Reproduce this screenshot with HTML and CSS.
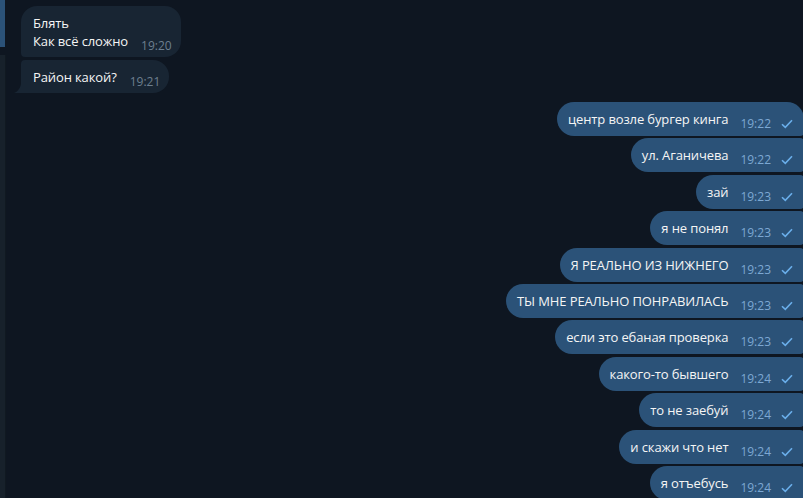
FILE: index.html
```html
<!DOCTYPE html>
<html lang="ru">
<head>
    <meta charset="UTF-8">
    <meta name="viewport" content="width=device-width, initial-scale=1.0">
    <title>Чат</title>
    <link rel="stylesheet" href="styles.css">
</head>
<body>
    <div class="app">
        <aside class="rail">
            <div class="rail-active"></div>
            <div class="rail-rest"></div>
        </aside>
        <main class="chat">
            <div class="group in">
                <div class="msg first">
                    <div class="text">Блять<br>Как всё сложно</div>
                    <div class="meta"><span class="time">19:20</span></div>
                </div>
                <div class="msg last">
                    <div class="text">Район какой?</div>
                    <div class="meta"><span class="time">19:21</span></div>
                    <svg class="tail" width="7" height="9" viewBox="0 0 7 9"><path d="M7 0 V9 H0 C3 8 6 5 7 0 Z" fill="#182533"/></svg>
                </div>
            </div>

            <div class="group out">
                <div class="msg first">
                    <div class="text">центр возле бургер кинга</div>
                    <div class="meta"><span class="time">19:22</span><svg class="check" width="12" height="10" viewBox="0 0 12 10"><path d="M1 5.2 L4.3 8.4 L11 1.2" fill="none" stroke="#6aaeea" stroke-width="1.6"/></svg></div>
                </div>
                <div class="msg">
                    <div class="text">ул. Аганичева</div>
                    <div class="meta"><span class="time">19:22</span><svg class="check" width="12" height="10" viewBox="0 0 12 10"><path d="M1 5.2 L4.3 8.4 L11 1.2" fill="none" stroke="#6aaeea" stroke-width="1.6"/></svg></div>
                </div>
                <div class="msg">
                    <div class="text">зай</div>
                    <div class="meta"><span class="time">19:23</span><svg class="check" width="12" height="10" viewBox="0 0 12 10"><path d="M1 5.2 L4.3 8.4 L11 1.2" fill="none" stroke="#6aaeea" stroke-width="1.6"/></svg></div>
                </div>
                <div class="msg">
                    <div class="text">я не понял</div>
                    <div class="meta"><span class="time">19:23</span><svg class="check" width="12" height="10" viewBox="0 0 12 10"><path d="M1 5.2 L4.3 8.4 L11 1.2" fill="none" stroke="#6aaeea" stroke-width="1.6"/></svg></div>
                </div>
                <div class="msg">
                    <div class="text">Я РЕАЛЬНО ИЗ НИЖНЕГО</div>
                    <div class="meta"><span class="time">19:23</span><svg class="check" width="12" height="10" viewBox="0 0 12 10"><path d="M1 5.2 L4.3 8.4 L11 1.2" fill="none" stroke="#6aaeea" stroke-width="1.6"/></svg></div>
                </div>
                <div class="msg">
                    <div class="text">ТЫ МНЕ РЕАЛЬНО ПОНРАВИЛАСЬ</div>
                    <div class="meta"><span class="time">19:23</span><svg class="check" width="12" height="10" viewBox="0 0 12 10"><path d="M1 5.2 L4.3 8.4 L11 1.2" fill="none" stroke="#6aaeea" stroke-width="1.6"/></svg></div>
                </div>
                <div class="msg">
                    <div class="text">если это ебаная проверка</div>
                    <div class="meta"><span class="time">19:23</span><svg class="check" width="12" height="10" viewBox="0 0 12 10"><path d="M1 5.2 L4.3 8.4 L11 1.2" fill="none" stroke="#6aaeea" stroke-width="1.6"/></svg></div>
                </div>
                <div class="msg">
                    <div class="text">какого-то бывшего</div>
                    <div class="meta"><span class="time">19:24</span><svg class="check" width="12" height="10" viewBox="0 0 12 10"><path d="M1 5.2 L4.3 8.4 L11 1.2" fill="none" stroke="#6aaeea" stroke-width="1.6"/></svg></div>
                </div>
                <div class="msg">
                    <div class="text">то не заебуй</div>
                    <div class="meta"><span class="time">19:24</span><svg class="check" width="12" height="10" viewBox="0 0 12 10"><path d="M1 5.2 L4.3 8.4 L11 1.2" fill="none" stroke="#6aaeea" stroke-width="1.6"/></svg></div>
                </div>
                <div class="msg">
                    <div class="text">и скажи что нет</div>
                    <div class="meta"><span class="time">19:24</span><svg class="check" width="12" height="10" viewBox="0 0 12 10"><path d="M1 5.2 L4.3 8.4 L11 1.2" fill="none" stroke="#6aaeea" stroke-width="1.6"/></svg></div>
                </div>
                <div class="msg last">
                    <div class="text">я отъебусь</div>
                    <div class="meta"><span class="time">19:24</span><svg class="check" width="12" height="10" viewBox="0 0 12 10"><path d="M1 5.2 L4.3 8.4 L11 1.2" fill="none" stroke="#6aaeea" stroke-width="1.6"/></svg></div>
                </div>
            </div>
        </main>
    </div>
</body>
</html>
```

FILE: styles.css
```css
body {
    margin: 0;
    padding: 0;
    background: #0e1621;
    color: #f5f5f5;
    font-family: 'Open Sans', 'Noto Sans', sans-serif;
    font-size: 13px;
    overflow: hidden;
}
.app {
    display: flex;
    width: 803px;
    height: 498px;
    overflow: hidden;
}
.rail {
    display: flex;
    flex-direction: column;
    gap: 8px;
    width: 5px;
    flex-shrink: 0;
}
.rail-active {
    height: 47px;
    background: #2b5278;
}
.rail-rest {
    flex: 1;
    background: #17212b;
    border-right: 1px solid #101921;
    margin-right: -1px;
}
.chat {
    flex: 1;
    padding: 6px 0 0 16px;
    min-width: 0;
}
.group {
    display: flex;
    flex-direction: column;
}
.group.in {
    align-items: flex-start;
    gap: 3px;
}
.group.out {
    align-items: flex-end;
    gap: 2.4px;
    margin: 9px -1px 0 0;
}
.msg {
    position: relative;
    display: flex;
    align-items: flex-end;
    line-height: 18px;
    white-space: nowrap;
}
.text {
    letter-spacing: -0.12px;
}
.in .msg {
    background: #182533;
    padding: 8px 9px 7px 12px;
}
.in .msg.first {
    border-radius: 16px 16px 16px 4px;
}
.in .msg.last {
    border-radius: 4px 16px 16px 0;
}
.out .msg {
    background: #2b5278;
    padding: 8px 11px 8px 11px;
    border-radius: 17px 4px 4px 17px;
}
.out .msg.first {
    border-radius: 17px 17px 4px 17px;
}
.out .msg.last {
    border-radius: 17px 4px 0 17px;
}
.meta {
    display: flex;
    align-items: center;
    margin-left: 13px;
    margin-bottom: -3px;
    line-height: 14px;
}
.out .meta {
    margin-left: 12px;
}
.time {
    font-size: 12px;
    color: #6d7f8f;
}
.out .time {
    color: #7da8d3;
}
.check {
    margin-left: 10px;
    display: block;
}
.tail {
    position: absolute;
    left: -7px;
    bottom: 0;
    display: block;
}
```
